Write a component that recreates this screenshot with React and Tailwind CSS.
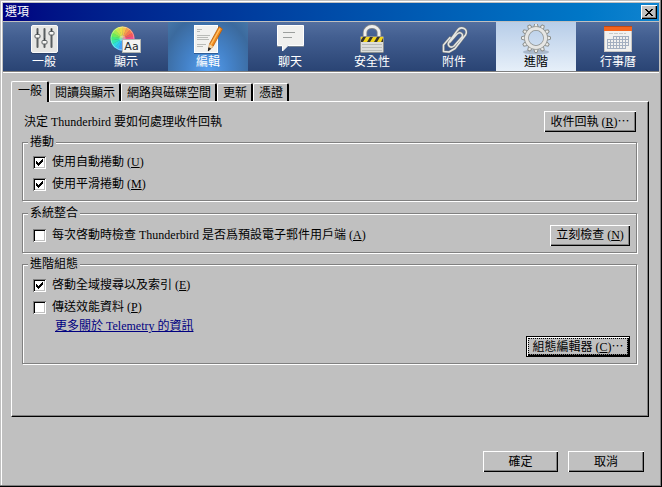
import React, { useState } from 'react';

const wheelColors = [
  '#f6c34a', '#f79a4d', '#f7774f', '#f4585c', '#f0508a', '#e455c0',
  '#c25be8', '#9a63f2', '#6f7df6', '#4aa0f8', '#33c3f4', '#2fdce0',
  '#33e8b0', '#44ea7c', '#6dec5a', '#9fec50', '#cbe94b', '#ecdc48',
];

const wedge = (i, count, cx, cy, r) => {
  const a = (i / count) * Math.PI * 2 - Math.PI / 2;
  const b = ((i + 1.1) / count) * Math.PI * 2 - Math.PI / 2;
  return `M${cx} ${cy}L${cx + r * Math.cos(a)} ${cy + r * Math.sin(a)}A${r} ${r} 0 0 1 ${cx + r * Math.cos(b)} ${cy + r * Math.sin(b)}Z`;
};

const SlidersIcon = () => (
  <svg viewBox="0 0 32 32" className="h-8 w-8" aria-hidden="true">
    <rect x="3" y="2" width="27" height="28" rx="1.5" fill="#1d2f52" opacity="0.5" />
    <rect x="3.5" y="1.5" width="26" height="27" rx="1.5" fill="#e6e6e4" stroke="#fafafa" />
    {[[9, 12], [16, 18], [23, 9]].map(([x, y]) => (
      <g key={x}>
        <path d={`M${x + 0.5} 5V23`} stroke="#5a5f61" strokeWidth="2" strokeLinecap="round" />
        <rect x={x - 2} y={y - 1.5} width="5" height="3.5" rx="1" fill="#f8f8f6" stroke="#5a5f61" />
        <path d={`M${x + 0.5} ${y - 4}V${y - 2}`} stroke="#3c4143" />
      </g>
    ))}
  </svg>
);

const DisplayIcon = () => (
  <svg viewBox="0 0 32 32" className="h-8 w-8" aria-hidden="true">
    {wheelColors.map((color, i) => (
      <path key={color} d={wedge(i, wheelColors.length, 12.5, 14.5, 12)} fill={color} />
    ))}
    <circle cx="12.5" cy="14.5" r="3" fill="#fff" opacity="0.35" />
    <circle cx="12.5" cy="14.5" r="11.5" fill="none" stroke="#fff" strokeOpacity="0.35" />
    <rect x="12.5" y="15.5" width="18" height="13" fill="#f4f4f2" stroke="#b4b6b2" />
    <text x="21.5" y="26" textAnchor="middle" fontSize="11" fontFamily="DejaVu Sans" fill="#23282a">Aa</text>
  </svg>
);

const ComposeIcon = () => (
  <svg viewBox="0 0 32 32" className="h-8 w-8" aria-hidden="true">
    <rect x="2.5" y="1.5" width="23" height="27" fill="#f1f1ef" stroke="#fff" />
    <path d="M2 29.5H26" stroke="#1e3f6c" opacity="0.6" />
    <path d="M5 5.5H10M5 7.5H8M5 11.5H18M5 13.5H16M5 15.5H17M5 20.5H14M5 22.5H11" stroke="#b9bbb8" />
    <path d="M27 2.5L30.5 5 21 22.5 16.5 26.5 17.5 20Z" fill="#f08a1d" stroke="#b45d0c" strokeWidth="0.8" />
    <path d="M28 4.5L19 20.5" stroke="#ffc064" strokeWidth="1.5" />
    <path d="M17.5 20L21 22.5 16.5 26.5Z" fill="#f3d6a4" />
    <path d="M16.8 23.8L18.6 24.8 16.3 26.8Z" fill="#222" stroke="#222" />
  </svg>
);

const ChatIcon = () => (
  <svg viewBox="0 0 32 32" className="h-8 w-8" aria-hidden="true">
    <path d="M3.5 1.5H29.5V21.5H14L8.5 27V21.5H3.5Z" fill="#f0f0ee" stroke="#fff" />
    <path d="M3 22.5H8M14.5 22.5H30" stroke="#8f9697" opacity="0.7" />
    <path d="M9 8.5H21M9 13.5H18" stroke="#9c9f9d" />
  </svg>
);

const LockIcon = () => (
  <svg viewBox="0 0 32 32" className="h-8 w-8" aria-hidden="true">
    <path d="M9 13V8.500A7 6 0 0 1 23 8.500V13" fill="none" stroke="#85888a" strokeWidth="4.4" />
    <path d="M9 13V8.500A7 6 0 0 1 23 8.500V13" fill="none" stroke="#eeeeec" strokeWidth="2.8" />
    <rect x="4.5" y="12.5" width="23" height="16" rx="1" fill="#dcdddb" stroke="#8b8f90" />
    <rect x="5" y="13" width="22" height="5" fill="#f2d51d" />
    <path d="M7 13h3l-3 5h-2v-2zM14 13h3l-3 5h-3zM21 13h3l-3 5h-3zM27 14v4h-2z" fill="#37352c" />
    <path d="M6 20.5H26M6 23.5H26M6 26.5H26" stroke="#b9bbb8" />
  </svg>
);

const clipPath =
  'M12 18L19 10C22 7 26 10 24 13L16 22C12 25 9 21 11 18L19 7C23 1 31 5 27.5 11L17 24.5 11 28 5.5 27.5 5.5 21 12 13.5';

const ClipIcon = () => (
  <svg viewBox="0 0 32 32" className="h-8 w-8" aria-hidden="true">
    <g fill="none" strokeLinejoin="round" strokeLinecap="round">
      <path d={clipPath} stroke="#73787b" strokeWidth="2.6" />
      <path d={clipPath} stroke="#e6e7e4" strokeWidth="1.5" />
    </g>
  </svg>
);

const GearIcon = () => (
  <svg viewBox="0 0 32 32" className="h-8 w-8" aria-hidden="true">
    <ellipse cx="16" cy="28" rx="13" ry="2.5" fill="#5b6c84" opacity="0.35" />
    {[0, 30, 60, 90, 120, 150, 180, 210, 240, 270, 300, 330].map((deg) => (
      <path key={deg} d="M13.5 4L14.8 -0.500H17.200L18.500 4Z" transform={`rotate(${deg} 16 14)`} fill="#ececea" stroke="#8d908e" />
    ))}
    <circle cx="16" cy="14" r="9.5" fill="none" stroke="#8d908e" strokeWidth="4.6" />
    <circle cx="16" cy="14" r="9.5" fill="none" stroke="#e6e6e4" strokeWidth="3.2" />
  </svg>
);

const CalendarIcon = () => (
  <svg viewBox="0 0 32 32" className="h-8 w-8" aria-hidden="true">
    <rect x="2.5" y="2.5" width="27" height="25" fill="#f1f1ef" stroke="#c9c6c3" />
    <rect x="2" y="2" width="28" height="5" fill="#f4641c" />
    <path d="M2 2.5H30" stroke="#c24a14" />
    <path d="M7 9.5H24" stroke="#c9cac8" strokeDasharray="4 1" />
    <path d="M11 12.5H27M5 15.5H27M5 18.5H27M5 21.5H27M5 24.5H24M5.5 15V25M8.5 15V25M11.5 12V25M14.5 12V25M17.5 12V25M20.5 12V25M23.5 12V25M26.5 12V22" stroke="#a3afc0" />
  </svg>
);

const categories = [
  { label: '一般', icon: SlidersIcon },
  { label: '顯示', icon: DisplayIcon },
  { label: '編輯', icon: ComposeIcon },
  { label: '聊天', icon: ChatIcon },
  { label: '安全性', icon: LockIcon },
  { label: '附件', icon: ClipIcon },
  { label: '進階', icon: GearIcon },
  { label: '行事曆', icon: CalendarIcon },
];

const tabs = ['一般', '閱讀與顯示', '網路與磁碟空間', '更新', '憑證'];

const categoryStyle = (label, selected) => {
  if (label === selected) return 'bg-linear-to-b from-[#b7cde8] to-[#e6eff9] text-black';
  if (label === '編輯') {
    return 'bg-[radial-gradient(ellipse_at_bottom,#559ff0_0%,#4482c8_40%,#3b6a9e_80%,#4677a8_100%)] text-white';
  }
  return 'text-white';
};

const Button = ({ children, className = '', focused = false }) => (
  <button
    type="button"
    className={`flex h-[21px] shrink-0 items-center justify-center whitespace-nowrap bg-[#c0c0c0] ${
      focused
        ? 'border border-black shadow-[inset_1px_1px_#fff,inset_-1px_-1px_#000,inset_-2px_-2px_#808080]'
        : 'shadow-[inset_1px_1px_#fff,inset_-1px_-1px_#000,inset_-2px_-2px_#808080]'
    } ${className}`}
  >
    {focused ? (
      <span className="flex h-[17px] items-center border border-dotted border-black px-[3px]">{children}</span>
    ) : (
      children
    )}
  </button>
);

const Key = ({ children }) => (
  <span className="whitespace-pre">
    {' ('}
    <u>{children}</u>)
  </span>
);

const Group = ({ title, children, className = '' }) => (
  <fieldset
    className={`min-w-0 border border-[#808080] shadow-[1px_1px_#fff,inset_1px_1px_#fff] ${className}`}
  >
    <legend className="ml-[5px] h-4 bg-[#c0c0c0] px-[2px] leading-4">{title}</legend>
    {children}
  </fieldset>
);

const Checkbox = ({ label, accessKey, defaultChecked }) => (
  <label className="flex h-[22px] items-center gap-[6px] pl-[10px]">
    <span className="grid h-[13px] w-[13px] shrink-0">
      <input
        type="checkbox"
        defaultChecked={defaultChecked}
        className="peer col-start-1 row-start-1 h-[13px] w-[13px] appearance-none bg-white shadow-[inset_1px_1px_#808080,inset_-1px_-1px_#fff,inset_2px_2px_#000,inset_-2px_-2px_#c0c0c0]"
      />
      <svg
        viewBox="0 0 13 13"
        className="pointer-events-none invisible z-10 col-start-1 row-start-1 h-[13px] w-[13px] peer-checked:visible"
        shapeRendering="crispEdges"
        aria-hidden="true"
      >
        <path d="M3 5h1v1h1v1h1v-1h1v-1h1v-1h1v-1h1v3h-1v1h-1v1h-1v1h-1v1h-1v-1h-1v-1h-1z" fill="#000" />
      </svg>
    </span>
    <span>
      {label}
      <Key>{accessKey}</Key>
    </span>
  </label>
);

const App = () => {
  const [category, setCategory] = useState('進階');
  const [tab, setTab] = useState('一般');

  return (
    <div className="flex min-h-screen flex-col bg-[#c0c0c0] p-[3px] font-['Liberation_Serif','Noto_Sans_CJK_TC',serif] text-[12px] leading-4 text-black shadow-[inset_-1px_-1px_#000,inset_-2px_-2px_#808080,inset_1px_1px_#c0c0c0,inset_2px_2px_#fff]">
      {/* Title bar */}
      <header className="flex h-[18px] shrink-0 items-center justify-between bg-linear-to-r from-[#000080] to-[#1084d0] pr-[2px] pl-[2px] text-white">
        <h1>選項</h1>
        <button
          type="button"
          aria-label="關閉"
          className="flex h-[14px] w-4 items-center justify-center bg-[#c0c0c0] shadow-[inset_1px_1px_#fff,inset_-1px_-1px_#000,inset_-2px_-2px_#808080]"
        >
          <svg viewBox="0 0 8 7" className="h-[7px] w-2" shapeRendering="crispEdges" aria-hidden="true">
            <path d="M0 0h2v1h1v1h2v-1h1v-1h2v1h-1v1h-1v1h-1v1h1v1h1v1h1v1h-2v-1h-1v-1h-2v1h-1v1h-2v-1h1v-1h1v-1h1v-1h-1v-1h-1v-1h-1z" fill="#000" />
          </svg>
        </button>
      </header>

      {/* Category bar */}
      <nav className="mt-px grid h-[50px] shrink-0 grid-cols-8 gap-[2px] border-b border-b-[#808080] bg-linear-to-b from-[#536f9f] from-0% via-[#435f91] via-30% to-[#2a4474] px-px shadow-[0_1px_#fff]">
        {categories.map(({ label, icon: Icon }) => (
          <button
            key={label}
            type="button"
            onClick={() => setCategory(label)}
            className={`flex flex-col items-center pt-[2px] ${categoryStyle(label, category)}`}
          >
            <Icon />
            <span className="-mt-px leading-[14px]">{label}</span>
          </button>
        ))}
      </nav>

      <main className="mt-[9px] flex flex-1 flex-col pr-[10px] pl-2">
        <div role="tablist" className="flex items-end">
          {tabs.map((name) => (
            <button
              key={name}
              type="button"
              role="tab"
              aria-selected={tab === name}
              onClick={() => setTab(name)}
              className={`rounded-t-[2px] border-t border-r-2 border-l border-t-white border-r-black border-l-white bg-[#c0c0c0] ${
                tab === name ? 'z-10 -mb-px h-[21px] pr-[5px] pl-[6px] pb-[3px]' : 'h-[18px] pr-[4px] pl-[5px]'
              }`}
            >
              {name}
            </button>
          ))}
        </div>

        <section
          role="tabpanel"
          className="flex-1 border-t border-r border-b border-l border-t-white border-r-black border-b-black border-l-white pt-[9px] pr-[11px] pl-[10px] shadow-[inset_-1px_-1px_#808080]"
        >
          <div className="flex items-center justify-between pr-px pl-[2px]">
            <p>決定 Thunderbird 要如何處理收件回執</p>
            <Button className="w-[92px]">
              收件回執
              <Key>R</Key>⋯
            </Button>
          </div>

          <Group title="捲動" className="mt-[2px] pt-px pb-[5px]">
            <Checkbox label="使用自動捲動" accessKey="U" defaultChecked />
            <Checkbox label="使用平滑捲動" accessKey="M" defaultChecked />
          </Group>

          <Group title="系統整合" className="mt-1 pt-[3px] pb-[6px]">
            <div className="flex items-center justify-between pr-[6px]">
              <Checkbox label="每次啓動時檢查 Thunderbird 是否爲預設電子郵件用戶端" accessKey="A" />
              <Button className="w-20">
                立刻檢查
                <Key>N</Key>
              </Button>
            </div>
          </Group>

          <Group title="進階組態" className="mt-[3px] pt-[2px] pb-[6px]">
            <Checkbox label="啓動全域搜尋以及索引" accessKey="E" defaultChecked />
            <Checkbox label="傳送效能資料" accessKey="P" />
            <a href="#telemetry" className="ml-8 text-[#000080] underline">
              更多關於 Telemetry 的資訊
            </a>
            <div className="mt-[2px] flex justify-end pr-[6px]">
              <Button focused className="w-[104px]">
                組態編輯器
                <Key>C</Key>⋯
              </Button>
            </div>
          </Group>
        </section>

        <footer className="flex justify-end gap-[10px] pt-[34px] pr-[5px] pb-3">
          <Button className="w-[75px]">確定</Button>
          <Button className="w-[76px]">取消</Button>
        </footer>
      </main>
    </div>
  );
};

export default App;
